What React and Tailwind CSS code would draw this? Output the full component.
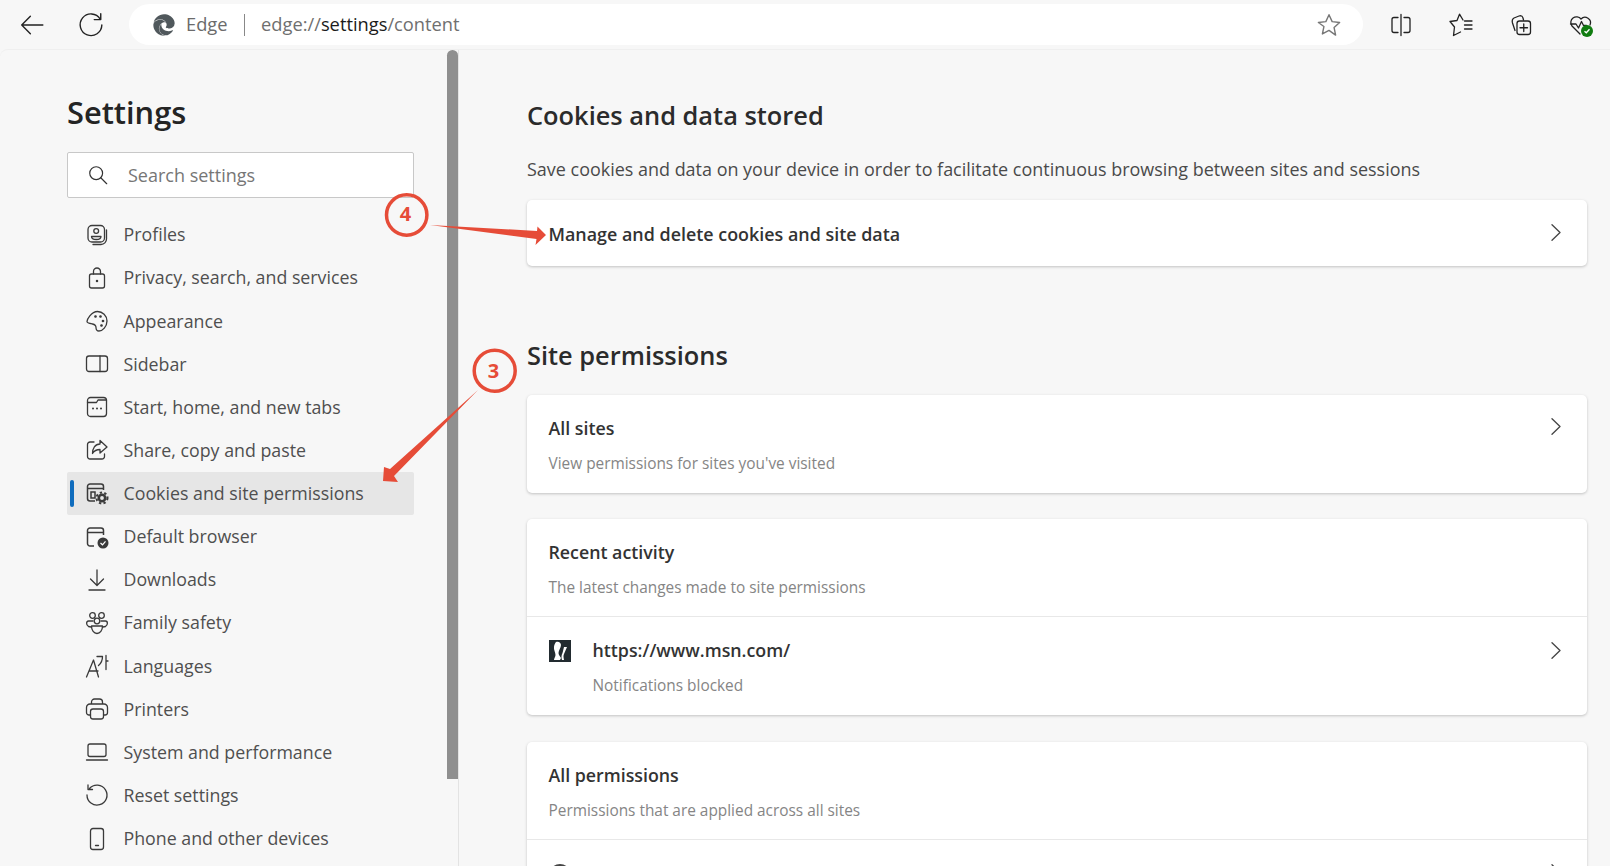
import { FaEdge } from 'react-icons/fa';

const font = { fontFamily: '"Open Sans", "Noto Sans", sans-serif' };

const navItems = [
  { label: 'Profiles', icon: <ProfilesIcon /> },
  { label: 'Privacy, search, and services', icon: <LockIcon /> },
  { label: 'Appearance', icon: <PaletteIcon /> },
  { label: 'Sidebar', icon: <SidebarIcon /> },
  { label: 'Start, home, and new tabs', icon: <HomeTabIcon /> },
  { label: 'Share, copy and paste', icon: <ShareIcon /> },
  { label: 'Cookies and site permissions', icon: <CookieIcon />, active: true },
  { label: 'Default browser', icon: <BrowserIcon /> },
  { label: 'Downloads', icon: <DownloadIcon /> },
  { label: 'Family safety', icon: <FamilyIcon /> },
  { label: 'Languages', icon: <LanguageIcon /> },
  { label: 'Printers', icon: <PrinterIcon /> },
  { label: 'System and performance', icon: <LaptopIcon /> },
  { label: 'Reset settings', icon: <ResetIcon /> },
  { label: 'Phone and other devices', icon: <PhoneIcon /> },
];

export default function App() {
  return (
    <div className="relative h-[866px] w-[1610px] overflow-hidden bg-[#f7f7f7]" style={font}>
      <Toolbar />
      <div className="flex h-[817px] rounded-tl-lg border-t border-[#efefef]">
        <Sidebar />
        <Content />
      </div>
      <Annotations />
    </div>
  );
}

function Toolbar() {
  return (
    <div className="flex h-[49px] items-center">
      <div className="flex w-[129px] items-center pl-[19px] gap-[33px] text-[#222]">
        <BackIcon />
        <RefreshIcon />
      </div>
      <div className="flex h-[41px] w-[1234px] items-center rounded-full bg-white pl-[24px] pr-[21px] text-[18.3px]">
        <FaEdge size={22} className="text-[#50585c]" />
        <span className="ml-[11px] -mt-[2px] text-[#6b6b6b]">Edge</span>
        <span className="mx-[16px] h-[22px] w-[1.5px] bg-[#888]" />
        <span className="-mt-[2px] text-[#6f6f6f]">edge://<span className="text-[#1b1b1b]">settings</span>/content</span>
        <StarIcon />
      </div>
      <div className="flex flex-1 items-center pl-[26px] gap-[36px] text-[#222]">
        <SplitIcon />
        <FavListIcon />
        <CollectionIcon />
        <HeartIcon />
      </div>
    </div>
  );
}

function Sidebar() {
  return (
    <aside className="relative h-full w-[459px] shrink-0 border-r border-[#e3e3e3] pl-[67px] pr-[44px]">
      <h1 className="pt-[39px] text-[30.8px] leading-[46px] font-semibold text-[#242424]">Settings</h1>
      <div className="mt-[17px] flex h-[46px] items-center rounded-[2px] border border-[#c8c8c8] bg-white pl-[19px]">
        <SearchIcon />
        <span className="ml-[19px] text-[18px] text-[#767676]">Search settings</span>
      </div>
      <nav className="mt-[15px]">
        {navItems.map((item) => (
          <div
            key={item.label}
            className={`relative flex h-[43.15px] items-center rounded-[2px] pl-[18px] text-[17.8px] text-[#4f4f4f] ${item.active ? 'bg-[#e6e6e6]' : ''}`}
          >
            {item.active && <span className="absolute left-[3px] top-[8px] h-[27px] w-[4px] rounded-full bg-[#0f6cbd]" />}
            <span className="flex h-[24px] w-[24px] items-center justify-center text-[#3a3a3a]">{item.icon}</span>
            <span className="ml-[14.5px]">{item.label}</span>
          </div>
        ))}
      </nav>
      {/* scrollbar */}
      <div className="absolute right-0 top-0 h-[729px] w-[11px] rounded-t-md bg-[#8f8f8f]" />
    </aside>
  );
}

function Content() {
  return (
    <main className="flex-1 overflow-hidden pl-[68px] pr-[23px]">
      <h2 className="pt-[46px] text-[25.4px] leading-[38px] font-semibold text-[#2b2b2b]">Cookies and data stored</h2>
      <p className="mt-[22px] text-[17.97px] leading-[26px] text-[#4a4a4a]">
        Save cookies and data on your device in order to facilitate continuous browsing between sites and sessions
      </p>
      <Card className="mt-[18px]">
        <div className="flex h-[66px] items-center justify-between pl-[21.5px] pr-[26px]">
          <span className="mt-[3px] text-[17.9px] font-semibold text-[#333]">Manage and delete cookies and site data</span>
          <span className="-mt-[1px]"><Chevron /></span>
        </div>
      </Card>

      <h2 className="mt-[70px] text-[25.4px] leading-[38px] font-semibold text-[#2b2b2b]">Site permissions</h2>
      <Card className="mt-[21px]">
        <Row title="All sites" sub="View permissions for sites you've visited" chevron className="h-[98px]" />
      </Card>
      <Card className="mt-[26px]">
        <Row title="Recent activity" sub="The latest changes made to site permissions" className="h-[98px] border-b border-[#e8e8e8]" />
        <div className="flex h-[98px] pl-[21.5px] pr-[26px] pt-[22px]">
          <span className="mt-[1px]"><MsnIcon /></span>
          <div className="ml-[22px] flex-1">
            <div className="text-[17.8px] leading-[22px] font-semibold text-[#333]">https://www.msn.com/</div>
            <div className="mt-[15px] text-[15.4px] leading-[20px] text-[#858585]">Notifications blocked</div>
          </div>
          <span className="mt-[3px]"><Chevron /></span>
        </div>
      </Card>
      <Card className="mt-[27px]">
        <Row title="All permissions" sub="Permissions that are applied across all sites" className="h-[98px] border-b border-[#e8e8e8]" />
        <div className="flex h-[60px] items-start justify-between pl-[21.5px] pr-[26px] pt-[24px]">
          <span className="h-[22px] w-[22px] rounded-full border-2 border-[#444]" />
          <Chevron />
        </div>
      </Card>
    </main>
  );
}

function Card({ className = '', children }) {
  return <div className={`rounded-[5px] bg-white shadow-[0_1px_3px_rgba(0,0,0,0.22)] ${className}`}>{children}</div>;
}

function Row({ title, sub, chevron, className = '' }) {
  return (
    <div className={`flex justify-between pl-[21.5px] pr-[26px] pt-[22px] ${className}`}>
      <div>
        <div className="text-[17.8px] leading-[22px] font-semibold text-[#333]">{title}</div>
        <div className="mt-[15px] text-[15.4px] leading-[20px] text-[#858585]">{sub}</div>
      </div>
      {chevron && <span className="mt-[1px]"><Chevron /></span>}
    </div>
  );
}

function Chevron() {
  return (
    <svg width="10" height="17" viewBox="0 0 10 17" fill="none" stroke="#444" strokeWidth="1.3" strokeLinecap="round" strokeLinejoin="round" className="block shrink-0">
      <path d="M1 .8 9 8.500 1 16.200" />
    </svg>
  );
}

function Annotations() {
  return (
    <>
      <svg className="pointer-events-none absolute left-0 top-0" width="1610" height="866">
        <circle cx="406.700" cy="215" r="20.200" fill="none" stroke="#e64c38" strokeWidth="3.500" />
        <circle cx="494.700" cy="370.800" r="20.500" fill="none" stroke="#e64c38" strokeWidth="3.500" />
        <path d="M430 225 L537 231 L537.500 226.500 L546 235 L535.500 245 L536.500 239 Z" fill="#e64c38" />
        <path d="M478 390 L390 469 L384 467 L383 481 L398 482 L394 476 Z" fill="#e64c38" />
      </svg>
      <span className="absolute left-[396.500px] top-[201px] w-[18px] text-center text-[20px] leading-[26px] font-bold text-[#e64c38]">4</span>
      <span className="absolute left-[484.500px] top-[358px] w-[18px] text-center text-[20px] leading-[26px] font-bold text-[#e64c38]">3</span>
    </>
  );
}

function Svg({ size = 24, children }) {
  return (
    <svg width={size} height={size} viewBox="0 0 24 24" fill="none" stroke="currentColor" strokeWidth="1.300" strokeLinecap="round" strokeLinejoin="round">
      {children}
    </svg>
  );
}

function BackIcon() {
  return <Svg size={26}><path d="M22 12H2.500M10.500 4l-8 8 8 8" /></Svg>;
}
function RefreshIcon() {
  return <Svg size={26}><path d="M20.500 6.500A10 10 0 1 0 22 12M21 1.500v5.500h-6" /></Svg>;
}
function StarIcon() {
  return (
    <span className="ml-auto text-[#777]">
      <Svg size={26}><path d="M12 2.500l2.900 6.400 6.900.8-5.100 4.700 1.400 6.900L12 17l-6.100 3.300 1.400-6.900L2.200 9.700l6.900-.8z" /></Svg>
    </span>
  );
}
function SplitIcon() {
  return <Svg size={24}><path d="M12 1.500v21M9 4.500H5a2 2 0 0 0-2 2v11a2 2 0 0 0 2 2h4M15 4.500h4a2 2 0 0 1 2 2v11a2 2 0 0 1-2 2h-4" /></Svg>;
}
function FavListIcon() {
  return <Svg size={24}><path d="M14 7 10.500 1.200 8 7.500 1 8.500 5.500 14 4.500 22.500 11.500 19M15.500 8h7.500M15.500 12h7.500M15.500 16h7.500" /></Svg>;
}
function CollectionIcon() {
  return (
    <Svg size={24}>
      <path d="M6 17.500 L3.500 10 Q2.500 6.500 5 5 L10 3 Q13 2 14 5 L14.500 7" />
      <rect x="8" y="8" width="13.500" height="13.500" rx="2.500" />
      <path d="M14.750 11v7.500M11 14.750h7.500" />
    </Svg>
  );
}
function HeartIcon() {
  return (
    <span className="relative block h-[24px] w-[26px]">
      <Svg size={24}><path d="M11 21L3 13A5.500 5.500 0 0 1 12 6a5.500 5.500 0 0 1 9 6M1.500 11H7l2.500 4 3-6.500 2 4h3" /></Svg>
      <span className="absolute bottom-[0px] right-[2px] flex h-[12px] w-[12px] items-center justify-center rounded-full bg-[#107c10]">
        <svg width="8" height="8" viewBox="0 0 8 8" fill="none" stroke="#fff" strokeWidth="1.300"><path d="M1.500 4.200l1.800 1.600 3.200-3.600" /></svg>
      </span>
    </span>
  );
}
function SearchIcon() {
  return (
    <span className="text-[#333]">
      <Svg size={22}><circle cx="10" cy="10" r="7" /><path d="M15 15l6.500 6.500" /></Svg>
    </span>
  );
}
function ProfilesIcon() {
  return <Svg><rect x="3" y="2.500" width="16.500" height="16.500" rx="4" /><path d="M21.500 7v9a5.500 5.500 0 0 1-5.500 5.500H8" /><circle cx="11.200" cy="8" r="2.400" /><path d="M6.500 13.500h9.500c0 2-2 3-4.700 3s-4.800-1-4.800-3z" /></Svg>;
}
function LockIcon() {
  return <Svg><rect x="4.500" y="8" width="15" height="14" rx="2" /><path d="M8.500 8V5.500a3.500 3.500 0 0 1 7 0V8" /><circle cx="12" cy="15" r=".6" fill="currentColor" /></Svg>;
}
function PaletteIcon() {
  return <Svg><path d="M12.500 2.500c5 0 9.500 4 9.500 9.500s-4.500 10-8 10c-2.500 0-3-1.500-3-3.500 0-2-1-3-3.500-3.500S2 14 2 12.500 6 2.500 12.500 2.500z" /><circle cx="10.500" cy="7.500" r=".7" fill="currentColor" /><circle cx="15.500" cy="7.500" r=".7" fill="currentColor" /><circle cx="18" cy="12" r=".7" fill="currentColor" /><circle cx="16.500" cy="16.500" r=".7" fill="currentColor" /></Svg>;
}
function SidebarIcon() {
  return <Svg><rect x="1.500" y="4" width="21" height="15.500" rx="2.500" /><path d="M15 4v15.500" /></Svg>;
}
function HomeTabIcon() {
  return <Svg><rect x="2.500" y="2.500" width="19" height="19" rx="3" /><path d="M2.500 7.500h9l1.500-2.500h8.500" /><path d="M8 13.500h.01M12 13.500h.01M16 13.500h.01" strokeWidth="2" /></Svg>;
}
function ShareIcon() {
  return <Svg><path d="M9 4H5a2.500 2.500 0 0 0-2.500 2.500v12A2.500 2.500 0 0 0 5 21h12a2.500 2.500 0 0 0 2.500-2.500V16" /><path d="M15 2.500l7 6.500-7 6v-3.500c-4 0-6 1.500-7.500 4 0-5 2.500-9.500 7.500-9.500z" /></Svg>;
}
function CookieIcon() {
  return (
    <svg width="24" height="24" viewBox="0 0 24 24" fill="none" stroke="currentColor" strokeWidth="1.500">
      <path d="M10 20H5a2.500 2.500 0 0 1-2.500-2.500v-12A2.500 2.500 0 0 1 5 3h11a2.500 2.500 0 0 1 2.500 2.500V9M2.500 7.500h16" />
      <rect x="6" y="11" width="4" height="6" />
      <circle cx="17" cy="17" r="3.200" strokeWidth="2.600" />
      <circle cx="17" cy="17" r="5.500" strokeWidth="2" strokeDasharray="2.300 2.300" />
    </svg>
  );
}
function BrowserIcon() {
  return (
    <svg width="24" height="24" viewBox="0 0 24 24" fill="none" stroke="currentColor" strokeWidth="1.500">
      <path d="M9 21H5a2.500 2.500 0 0 1-2.500-2.500v-13A2.500 2.500 0 0 1 5 3h11a2.500 2.500 0 0 1 2.500 2.500V10M2.500 7.500h16" />
      <circle cx="18" cy="18" r="5.500" fill="currentColor" stroke="none" />
      <path d="M15.500 18l2 1.800 3-3.500" stroke="#fff" strokeWidth="1.200" />
    </svg>
  );
}
function DownloadIcon() {
  return <Svg><path d="M12 2v15M5.500 11l6.500 6.500 6.500-6.500M4 22h16" /></Svg>;
}
function FamilyIcon() {
  return <Svg><circle cx="7.500" cy="4.500" r="2.800" /><circle cx="16.500" cy="4.500" r="2.800" /><circle cx="12" cy="10" r="2.800" /><path d="M8 10H3.500C1 10 1 14 3.500 15.500L6 16M16 10h4.500C23 10 23 14 20.500 15.500L18 16M6.500 15h11c0 4.500-2.500 7.500-5.500 7.500S6.500 19.500 6.500 15z" /></Svg>;
}
function LanguageIcon() {
  return <Svg><path d="M1.500 23L8.500 6l5 17M4 17h9M12 2.500h5.500c0 4-1.500 7-4 9M21 1.500v14M21 7h2" /></Svg>;
}
function PrinterIcon() {
  return <Svg><path d="M6.500 7V5a3 3 0 0 1 3-3h5a3 3 0 0 1 3 3v2M5.500 18H4a2.500 2.500 0 0 1-2.500-2.500v-5A3.500 3.500 0 0 1 5 7h14a3.500 3.500 0 0 1 3.500 3.500v5A2.500 2.500 0 0 1 20 18h-1.500" /><rect x="5.500" y="12" width="13" height="10" rx="2.500" /></Svg>;
}
function LaptopIcon() {
  return <Svg><rect x="3" y="4" width="18" height="12.500" rx="2" /><path d="M1.500 20h21" /></Svg>;
}
function ResetIcon() {
  return <Svg><path d="M4.500 5.500A10 10 0 1 1 2 12M3 2v4.500h4.500" /></Svg>;
}
function PhoneIcon() {
  return <Svg><rect x="5.500" y="1.500" width="13" height="21" rx="2.500" /><path d="M10.500 18.500h3" /></Svg>;
}
function MsnIcon() {
  return (
    <svg width="22" height="22" viewBox="0 0 22 22" className="block shrink-0">
      <rect width="22" height="22" fill="#222b30" />
      <path fill="#fff" d="M7 2c2.500-1 5 .5 5 3 0 3-2.500 5-2.500 8 0 2 1.500 3 2.500 5l-1 2H5c0-2 1.500-3 1.500-5 0-3-2-5-1.500-8 .2-2 1-4 2-5z" />
      <path fill="#fff" d="M15 7h3l-3 7c-.8 2-.5 3 0 6h-2c-1-3-.5-5 .5-7z" />
    </svg>
  );
}
